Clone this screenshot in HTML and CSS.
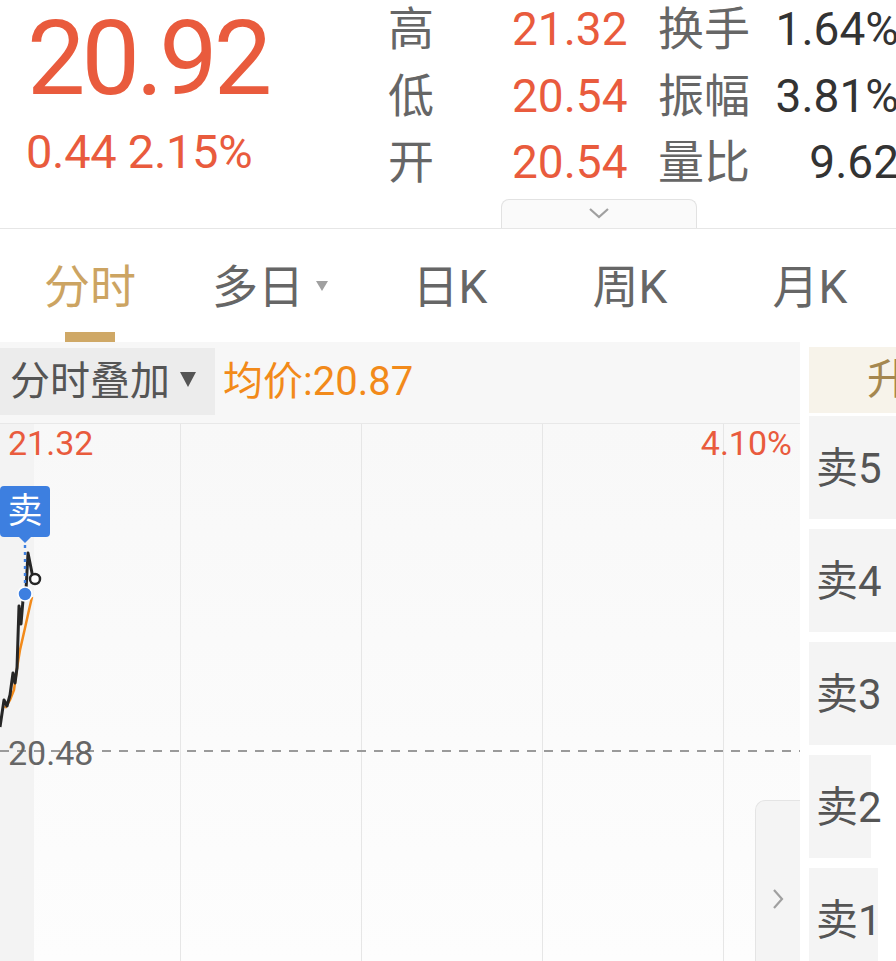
FILE: index.html
```html
<!DOCTYPE html>
<html lang="zh-CN">
<head>
    <meta charset="UTF-8">
    <meta name="viewport" content="width=device-width, initial-scale=1.0">
    <title>分时</title>
    <link rel="stylesheet" href="styles.css">
</head>
<body>

    <div class="quote">
        <div class="quote-top">
            <div class="price-box">
                <div class="price">20.92</div>
                <div class="change">0.44 2.15%</div>
            </div>
            <div class="stats">
                <span class="label">高</span><span class="val">21.32</span><span class="label">换手</span><span class="val2">1.64%</span>
                <span class="label">低</span><span class="val">20.54</span><span class="label">振幅</span><span class="val2">3.81%</span>
                <span class="label">开</span><span class="val">20.54</span><span class="label">量比</span><span class="val2">9.62</span>
            </div>
        </div>
        <div class="expand">
            <svg width="22" height="12" viewBox="0 0 22 12"><polyline points="2,2 11,10 20,2" fill="none" stroke="#a0a0a0" stroke-width="2.2"/></svg>
        </div>
    </div>

    <div class="tabs">
        <div class="tab active"><span>分时</span><i class="underline"></i></div>
        <div class="tab"><span>多日<b class="caret"></b></span></div>
        <div class="tab"><span>日K</span></div>
        <div class="tab"><span>周K</span></div>
        <div class="tab"><span>月K</span></div>
    </div>

    <div class="main">
        <div class="chart-col">
            <div class="toolbar">
                <div class="overlay-btn">分时叠加<b class="down"></b></div>
                <div class="avg">均价:20.87</div>
            </div>
            <div class="chart">
                <div class="grid">
                    <div></div><div></div><div></div><div></div>
                </div>
                <div class="axis top-left">21.32</div>
                <div class="axis top-right">4.10%</div>
                <div class="dash-line"></div>
                <div class="axis mid-left">20.48</div>

                <svg class="lines" width="60" height="320" viewBox="0 0 60 320">
                    <polyline points="5,284 10,276 14,266 17,244 20,226 25,204 29,186 32,173" fill="none" stroke="#f28a1a" stroke-width="2.5"/>
                    <polyline points="0,303 4,276 7,282 10,271 13,249 15,259 17,244 19,182 21,200 23,176 26,166 28,129 31,144 33,154" fill="none" stroke="#262626" stroke-width="3" stroke-linejoin="round"/>
                    <line x1="25" y1="121" x2="25" y2="164" stroke="#3d7fe0" stroke-width="2.4" stroke-dasharray="3 4"/>
                    <circle cx="25" cy="170" r="7" fill="#3d7fe0" stroke="#fff" stroke-width="1.5"/>
                    <circle cx="35" cy="155" r="5" fill="#fff" stroke="#262626" stroke-width="2.5"/>
                </svg>

                <div class="tip">卖</div>

                <div class="collapse">
                    <svg width="14" height="22" viewBox="0 0 14 22"><polyline points="3,2 11,11 3,20" fill="none" stroke="#a0a0a0" stroke-width="2.2"/></svg>
                </div>
            </div>
        </div>

        <div class="book">
            <div class="book-head">升</div>
            <div class="sell">卖5</div>
            <div class="sell">卖4</div>
            <div class="sell">卖3</div>
            <div class="sell narrow">卖2</div>
            <div class="sell mid">卖1</div>
        </div>
    </div>

</body>
</html>
```

FILE: styles.css
```css
body {
    margin: 0;
    width: 896px;
    height: 961px;
    overflow: hidden;
    background: #fff;
    font-family: Roboto, "Noto Sans CJK SC", sans-serif;
    color: #333;
}
.quote {
    height: 228px;
    border-bottom: 1px solid #e6e6e6;
    display: flex;
    flex-direction: column;
}
.quote-top {
    height: 199px;
    display: flex;
}
.price-box {
    width: 361px;
    padding-left: 27px;
    padding-top: 7px;
    color: #e95b3d;
    flex-shrink: 0;
}
.price {
    font-size: 104px;
    line-height: 104px;
    letter-spacing: -4px;
}
.change {
    margin-top: 18px;
    margin-left: -1px;
    font-size: 47px;
    line-height: 46px;
    letter-spacing: -0.3px;
}
.stats {
    margin-top: -4px;
    display: grid;
    grid-template-columns: 124px 146px 90px 151px;
    grid-auto-rows: 66.5px;
    font-size: 46px;
    line-height: 66px;
    white-space: nowrap;
    flex-shrink: 0;
}
.stats .label {
    color: #666;
}
.stats .val {
    color: #e95b3d;
}
.stats .val2 {
    color: #333;
    text-align: right;
}
.expand {
    margin-left: 501px;
    width: 196px;
    height: 29px;
    border: 1px solid #e2e2e2;
    border-bottom: none;
    border-radius: 8px 8px 0 0;
    background: #fafafa;
    display: flex;
    justify-content: center;
    padding-top: 7px;
    box-sizing: border-box;
}
.tabs {
    display: flex;
    height: 113px;
}
.tab {
    width: 180px;
    flex-shrink: 0;
    display: flex;
    flex-direction: column;
    align-items: center;
    padding-top: 35px;
    box-sizing: border-box;
    font-size: 46px;
    line-height: 46px;
    color: #666;
}
.tab.active {
    color: #cca462;
}
.underline {
    display: block;
    width: 50px;
    height: 10px;
    margin-top: 22px;
    background: #cfa866;
}
.caret {
    display: inline-block;
    margin-left: 12px;
    vertical-align: 12px;
    border-left: 6px solid transparent;
    border-right: 6px solid transparent;
    border-top: 10px solid #a0a0a0;
}
.main {
    display: flex;
    gap: 9px;
}
.chart-col {
    width: 800px;
    flex-shrink: 0;
}
.toolbar {
    height: 82px;
    background: #f7f7f7;
    border-bottom: 1px solid #e8e8e8;
    display: flex;
    align-items: flex-start;
    padding-top: 6px;
    box-sizing: border-box;
}
.overlay-btn {
    width: 215px;
    height: 67px;
    background: #ececec;
    font-size: 40px;
    line-height: 67px;
    color: #555;
    padding-left: 10px;
    box-sizing: border-box;
}
.down {
    display: inline-block;
    margin-left: 10px;
    vertical-align: 8px;
    border-left: 8px solid transparent;
    border-right: 8px solid transparent;
    border-top: 15px solid #555;
}
.avg {
    margin-left: 8px;
    font-size: 40px;
    line-height: 67px;
    color: #f28a1a;
}
.chart {
    position: relative;
    height: 537px;
    background: linear-gradient(to right, #f3f3f3 0 34px, transparent 34px), linear-gradient(#f8f8f8, #fdfdfd);
}
.grid {
    display: flex;
    height: 100%;
}
.grid div {
    width: 180px;
    flex-shrink: 0;
    border-right: 1px solid #e6e6e6;
}
.axis {
    position: absolute;
    font-size: 34px;
    line-height: 34px;
}
.top-left {
    left: 8px;
    top: 2px;
    color: #e95b3d;
}
.top-right {
    right: 8px;
    top: 2px;
    color: #e95b3d;
}
.mid-left {
    left: 8px;
    top: 312px;
    color: #666;
}
.dash-line {
    position: absolute;
    left: 0;
    right: 0;
    top: 326px;
    height: 2px;
    background: repeating-linear-gradient(to right, #9a9a9a 0 9px, transparent 9px 17px);
}
.lines {
    position: absolute;
    left: 0;
    top: 0;
}
.tip {
    position: absolute;
    left: 0;
    top: 62px;
    width: 50px;
    height: 51px;
    border-radius: 4px;
    background: #3d7fe0;
    color: #fff;
    font-size: 35px;
    line-height: 51px;
    text-align: center;
}
.tip::after {
    content: "";
    position: absolute;
    left: 19px;
    bottom: -6px;
    border-left: 6px solid transparent;
    border-right: 6px solid transparent;
    border-top: 6px solid #3d7fe0;
}
.collapse {
    position: absolute;
    right: 0;
    top: 376px;
    bottom: 0;
    width: 45px;
    border: 1px solid #e4e4e4;
    border-right: none;
    border-bottom: none;
    border-radius: 10px 0 0 0;
    background: #f4f4f4;
    display: flex;
    justify-content: center;
    align-items: flex-start;
    padding-top: 87px;
    box-sizing: border-box;
}
.book {
    width: 130px;
    flex-shrink: 0;
    padding-top: 5px;
    display: flex;
    flex-direction: column;
    gap: 10px;
    white-space: nowrap;
}
.book-head {
    height: 66px;
    margin-bottom: -7px;
    background: #f7f3ea;
    color: #a5874f;
    font-size: 42px;
    line-height: 66px;
    padding-left: 58px;
}
.sell {
    height: 103px;
    background: #f4f4f4;
    color: #555;
    font-size: 42px;
    line-height: 106px;
    padding-left: 7px;
}
.sell.narrow {
    width: 62px;
    box-sizing: border-box;
}
.sell.mid {
    width: 69px;
    box-sizing: border-box;
}
```
